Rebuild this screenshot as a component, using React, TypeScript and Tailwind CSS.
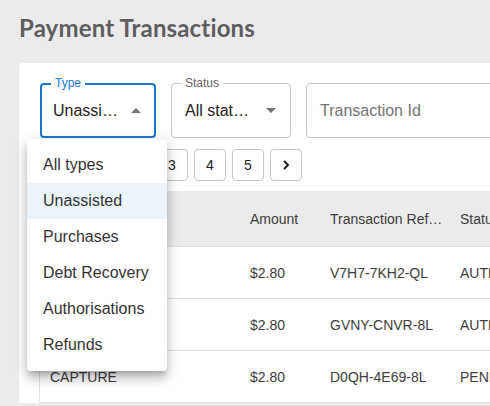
import { useState } from 'react';

const typeOptions = [
    'All types',
    'Unassisted',
    'Purchases',
    'Debt Recovery',
    'Authorisations',
    'Refunds',
];

const rows = [
    { type: 'AUTH_CAPTURE', amount: '$2.80', ref: 'V7H7-7KH2-QL', status: 'AUTHORISED' },
    { type: 'AUTH_CAPTURE', amount: '$2.80', ref: 'GVNY-CNVR-8L', status: 'AUTHORISED' },
    { type: 'CAPTURE', amount: '$2.80', ref: 'D0QH-4E69-8L', status: 'PENDING' },
];

function Caret({ up }: { up?: boolean }) {
    return (
        <svg width="10" height="5" viewBox="0 0 10 5" className="shrink-0">
            <path d={up ? 'M0 5 L5 0 L10 5 Z' : 'M0 0 L5 5 L10 0 Z'} fill="#757575" />
        </svg>
    );
}

export default function App() {
    const [selected] = useState<string>('Unassisted');

    return (
        <div
            className="relative h-[406px] w-[490px] overflow-hidden bg-[#ebebeb] pl-[19px]"
            style={{ fontFamily: '"Liberation Sans", Arial, sans-serif' }}
        >
            <h1
                className="pt-[13px] text-[24px] font-bold leading-[29px] tracking-[0.15px] text-[#5e5e5e]"
                style={{ fontFamily: 'Lato, "Liberation Sans", sans-serif' }}
            >
                Payment Transactions
            </h1>

            <div className="mt-[21px] w-[620px] rounded-tl-[4px] bg-white pl-[21px] pt-[20px]">
                {/* filters */}
                <div className="flex gap-[15px]">
                    <div className="relative flex h-[55px] w-[116px] items-center rounded-[4px] border-2 border-[#1976d2] pl-[11px] pr-[13px]">
                        <span className="absolute -top-[9px] left-[9px] bg-white px-[4px] text-[12px] leading-[14px] text-[#1976d2]">
                            Type
                        </span>
                        <span className="w-[67px] truncate text-[16px] text-[#222]">{selected}</span>
                        <span className="ml-auto"><Caret up /></span>
                    </div>
                    <div className="relative flex h-[55px] w-[120px] items-center rounded-[4px] border border-[#c4c4c4] pl-[13px] pr-[14px]">
                        <span className="absolute -top-[8px] left-[9px] bg-white px-[4px] text-[12px] leading-[14px] text-[#666]">
                            Status
                        </span>
                        <span className="w-[66px] truncate text-[16px] text-[#222]">All statuses</span>
                        <span className="ml-auto"><Caret /></span>
                    </div>
                    <div className="flex h-[55px] w-[260px] items-center rounded-[4px] border border-[#c4c4c4] pl-[13px]">
                        <span className="text-[16px] text-[#757575]">Transaction Id</span>
                    </div>
                </div>

                {/* pagination */}
                <div className="ml-[2px] mt-[11px] flex gap-[6px]">
                    {['‹', '1', '2', '3', '4', '5', '›'].map((p, i) => (
                        <div
                            key={i}
                            className="flex h-[32px] w-[32px] items-center justify-center rounded-[4px] border border-[#c4c4c4] text-[14px] text-[#222]"
                        >
                            {p === '›' ? (
                                <svg width="8" height="10" viewBox="0 0 8 10">
                                    <path d="M2 1 L6 5 L2 9" stroke="#222" strokeWidth="2" fill="none" />
                                </svg>
                            ) : p === '‹' ? (
                                <svg width="8" height="10" viewBox="0 0 8 10">
                                    <path d="M6 1 L2 5 L6 9" stroke="#222" strokeWidth="2" fill="none" />
                                </svg>
                            ) : (
                                p
                            )}
                        </div>
                    ))}
                </div>

                {/* table */}
                <div className="-ml-[1px] mt-[10px] border-l border-[#e0e0e0] text-[14px] text-[#3d3d3d]">
                    <div className="grid h-[56px] grid-cols-[200px_80px_130px_1fr] items-center border-b border-[#e0e0e0] bg-[#ebebeb] pt-[1px]">
                        <span className="pl-[10px]">Type</span>
                        <span className="pl-[10px]">Amount</span>
                        <span className="truncate pl-[10px] pr-[2px]">Transaction Reference</span>
                        <span className="pl-[10px]">Status</span>
                    </div>
                    {rows.map((r, i) => (
                        <div
                            key={i}
                            className="grid h-[52px] grid-cols-[200px_80px_130px_1fr] items-center border-b border-[#e0e0e0] pt-[2px]"
                        >
                            <span className="pl-[10px]">{r.type}</span>
                            <span className="pl-[10px]">{r.amount}</span>
                            <span className="pl-[10px]">{r.ref}</span>
                            <span className="pl-[10px]">{r.status}</span>
                        </div>
                    ))}
                </div>
            </div>

            {/* open menu of Type select */}
            <div className="absolute left-[27px] top-[139px] w-[140px] rounded-[4px] bg-white py-[8px] shadow-[0px_5px_5px_-3px_rgba(0,0,0,0.2),0px_8px_10px_1px_rgba(0,0,0,0.14),0px_3px_14px_2px_rgba(0,0,0,0.12)]">
                {typeOptions.map((o) => (
                    <div
                        key={o}
                        className={
                            'flex h-[36px] items-center pl-[16px] text-[16px] text-[#333] ' +
                            (o === selected ? 'bg-[#ebf3fb]' : '')
                        }
                    >
                        {o}
                    </div>
                ))}
            </div>
        </div>
    );
}
